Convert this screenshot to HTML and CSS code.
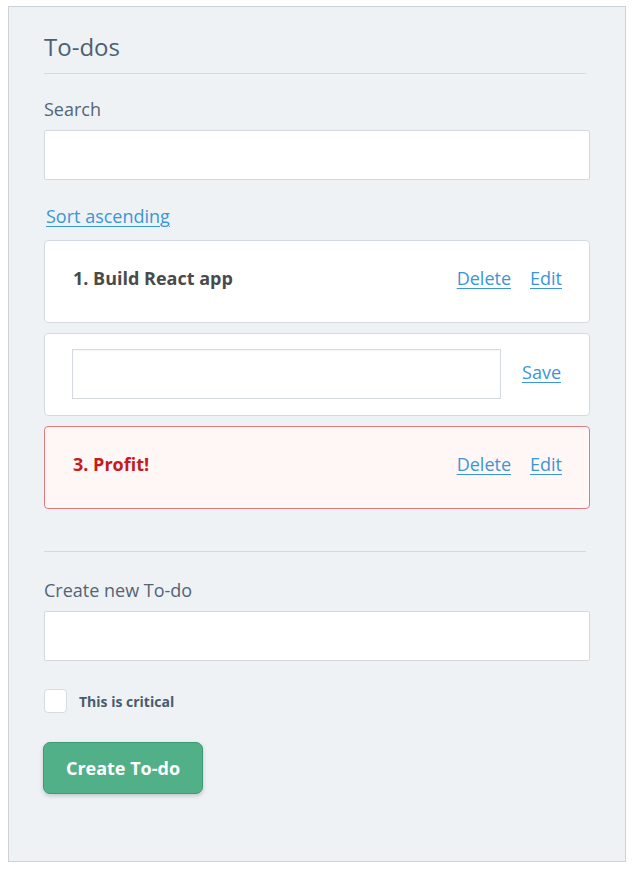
FILE: index.html
```html
<!DOCTYPE html>
<html>
<head>
<meta charset="utf-8">
<link rel="stylesheet" href="styles.css">
</head>
<body>
<div class="panel">
  <h1 class="title">To-dos</h1>
  <hr class="rule rule-top">
  <label class="label label-search">Search</label>
  <input class="field" type="text">
  <a class="link sort-link" href="#">Sort ascending</a>
  <div class="list">
    <div class="card">
      <span class="todo-text">1. Build React app</span>
      <div class="actions">
        <a class="link" href="#">Delete</a>
        <a class="link" href="#">Edit</a>
      </div>
    </div>
    <div class="card card-edit">
      <input class="field edit-field" type="text">
      <div class="actions">
        <a class="link" href="#">Save</a>
      </div>
    </div>
    <div class="card card-critical">
      <span class="todo-text">3. Profit!</span>
      <div class="actions">
        <a class="link" href="#">Delete</a>
        <a class="link" href="#">Edit</a>
      </div>
    </div>
  </div>
  <hr class="rule rule-bottom">
  <label class="label label-create">Create new To-do</label>
  <input class="field" type="text">
  <label class="check-row">
    <span class="checkbox"></span>
    <span class="check-text">This is critical</span>
  </label>
  <button class="btn">Create To-do</button>
</div>
</body>
</html>
```
FILE: styles.css
```css
* { box-sizing: border-box; }
html, body { background: #ffffff; }
body {
  margin: 6px 8px 0 8px;
  font-family: "Open Sans", "Noto Sans", sans-serif;
}
.panel {
  width: 618px;
  height: 856px;
  background: #eef2f5;
  border: 1px solid #cbd2d9;
  box-shadow: 0 1px 4px rgba(0,0,0,0.08);
  padding: 25px 35px 0 35px;
  display: flex;
  flex-direction: column;
  align-items: stretch;
}
.title {
  margin: 0;
  font-size: 24px;
  line-height: 30px;
  font-weight: 400;
  color: #4d6070;
}
.rule {
  border: 0;
  border-top: 1px solid #d3d9df;
  margin: 0 4px 0 0;
  height: 0;
}
.rule-top { margin-top: 11px; }
.label {
  display: block;
  font-size: 18px;
  line-height: 24px;
  color: #536575;
}
.label-search { margin-top: 23px; }
.field {
  display: block;
  width: 100%;
  height: 50px;
  margin-top: 9px;
  background: #ffffff;
  border: 1px solid #d3d9df;
  border-radius: 2px;
  font: inherit;
  outline: none;
}
.link {
  color: #3a96d8;
  font-size: 18px;
  line-height: 24px;
  text-decoration: underline;
  text-underline-offset: 3px;
  text-decoration-thickness: 1px;
}
.sort-link {
  align-self: flex-start;
  margin: 24px 0 0 2px;
}
.list {
  margin-top: 12px;
  display: flex;
  flex-direction: column;
  gap: 10px;
}
.card {
  height: 83px;
  background: #ffffff;
  border: 1px solid #d3d9df;
  border-radius: 4px;
  padding: 0 27px 5px 28px;
  display: flex;
  align-items: center;
  justify-content: space-between;
}
.todo-text {
  font-size: 18px;
  font-weight: 700;
  color: #4a4a4a;
  margin-top: -3px;
}
.actions {
  display: flex;
  gap: 19px;
  margin-top: -3px;
}
.card-edit {
  padding: 0 28px 1px 27px;
}
.card-edit .actions { margin-top: -4px; }
.edit-field {
  margin: 0;
  width: 429px;
  height: 50px;
  border-radius: 0;
  border-color: #d3d9df;
  box-shadow: inset 0 1px 2px rgba(0,0,0,0.04);
}
.card-critical {
  background: #fff6f6;
  border-color: #e07a7c;
}
.card-critical .todo-text { color: #c51a20; }
.rule-bottom { margin-top: 42px; }
.label-create { margin-top: 26px; }
.check-row {
  display: flex;
  align-items: center;
  gap: 12px;
  margin-top: 28px;
}
.checkbox {
  width: 23px;
  height: 24px;
  background: #ffffff;
  border: 1px solid #d6dce1;
  border-radius: 4px;
}
.check-text {
  font-size: 14px;
  font-weight: 700;
  color: #4a5b6b;
}
.btn {
  align-self: flex-start;
  margin: 29px 0 0 -1px;
  width: 160px;
  height: 52px;
  background: #52b088;
  border: 1px solid #3e9a73;
  border-radius: 7px;
  box-shadow: 0 2px 4px rgba(0,0,0,0.18);
  color: #ffffff;
  font-family: "Open Sans", "Noto Sans", sans-serif;
  font-size: 18px;
  font-weight: 700;
  padding: 0;
}
```
